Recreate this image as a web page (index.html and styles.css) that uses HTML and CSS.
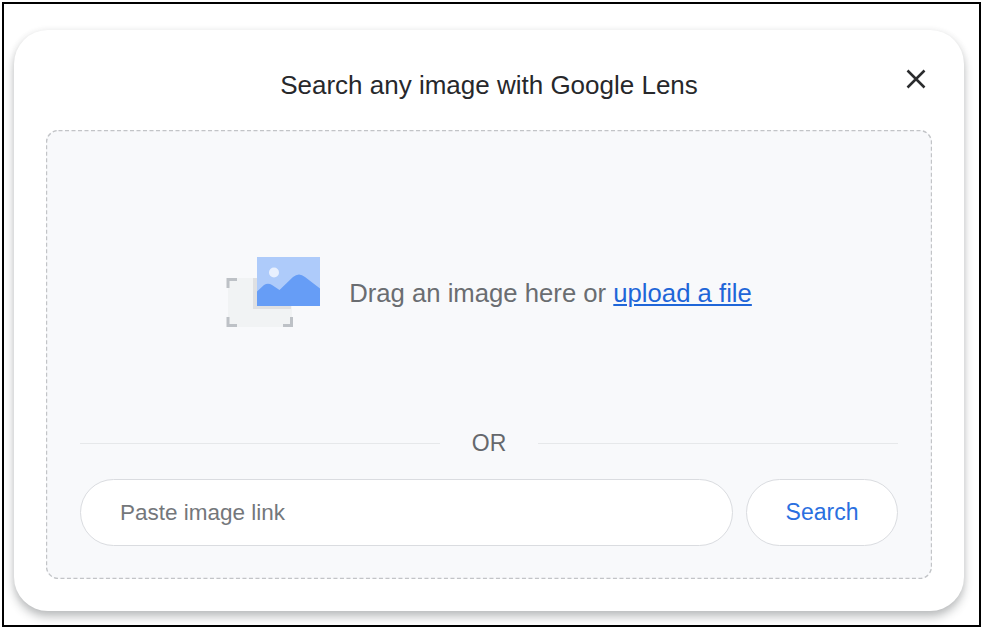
FILE: index.html
```html
<!DOCTYPE html>
<html lang="en">
<head>
<meta charset="utf-8">
<title>Search any image with Google Lens</title>
<link rel="stylesheet" href="styles.css">
</head>
<body>
<div class="frame">
  <section class="card">
    <header class="card-head">
      <h1 class="title">Search any image with Google Lens</h1>
      <button class="close" aria-label="Close">
        <svg width="20" height="20" viewBox="0 0 20 20"><path d="M1.500 1.500 18.500 18.500M18.500 1.500 1.500 18.500" stroke="#2b2c2e" stroke-width="2.500" fill="none"/></svg>
      </button>
    </header>
    <div class="dropzone">
      <svg class="dash-border"><rect class="dash-rect" x="0.500" y="0.500" rx="12" ry="12"/></svg>
      <div class="drop-msg">
        <svg class="drop-icon" width="96" height="72" viewBox="0 0 96 72">
          <rect x="3" y="22" width="64" height="49" fill="#f1f3f4"/>
          <rect x="28" y="22" width="38" height="31" fill="#dfe0e2"/>
          <path d="M12 23.500H3V32M3 61V69.500H12M58 69.500H66.500V61" stroke="#bdc1c6" stroke-width="3" fill="none"/>
          <rect x="32" y="1" width="63" height="49" fill="#aecbfa"/>
          <circle cx="49" cy="16.500" r="5" fill="#e8f0fe"/>
          <path d="M32 35.500 39 29Q43 26.500 47 29L54.500 34 68 21Q74 16 80 21L95 32.500V50H32Z" fill="#669df6"/>
        </svg>
        <p class="drop-text">Drag an image here or <a href="#" class="upload">upload a file</a></p>
      </div>
      <div class="or-row"><span class="or-line"></span><span class="or-text">OR</span><span class="or-line"></span></div>
      <div class="link-row">
        <div class="link-input">Paste image link</div>
        <button class="search-btn">Search</button>
      </div>
    </div>
  </section>
</div>
</body>
</html>
```
FILE: styles.css
```css
* { box-sizing: border-box; }
html, body { margin: 0; background: #fff; }
body { padding: 2px 0 0 2px; height: 629px; overflow: hidden; font-family: "Liberation Sans", Arial, sans-serif; }
.frame {
  width: 979px;
  height: 625px;
  border: 2px solid #000;
  padding: 26px 15px 13px 10px;
}
.card {
  height: 581px;
  background: #fff;
  border-radius: 34px;
  box-shadow: 0 6px 10px rgba(60, 64, 67, .32), 0 0 6px rgba(60, 64, 67, .08);
  padding: 0 32px 32px;
  display: flex;
  flex-direction: column;
}
.card-head {
  height: 100px;
  display: flex;
  align-items: flex-start;
  justify-content: center;
  position: relative;
}
.title {
  margin: 40px 0 0;
  font-size: 26px;
  line-height: 30px;
  font-weight: 400;
  color: #27282b;
}
.close {
  position: absolute;
  right: 6px;
  top: 39px;
  width: 20px;
  height: 20px;
  padding: 0;
  border: 0;
  background: none;
  display: flex;
}
.dropzone {
  flex: 1;
  position: relative;
  border-radius: 12px;
  background: #f8f9fb;
  padding: 0 34px 33px;
  display: flex;
  flex-direction: column;
}
.dash-border {
  position: absolute;
  top: 0;
  left: 0;
  width: 100%;
  height: 100%;
  pointer-events: none;
}
.dash-rect {
  width: calc(100% - 1px);
  height: calc(100% - 1px);
  fill: none;
  stroke: #c2c4c7;
  stroke-width: 1.4;
  stroke-dasharray: 4 2.500;
}
.drop-msg {
  height: 302px;
  display: flex;
  align-items: center;
  justify-content: center;
  gap: 28px;
  padding: 24px 0 0 0;
}
.drop-icon { display: block; flex: none; margin-bottom: 2px; margin-left: -1px; }
.drop-text {
  margin: 0;
  font-size: 25.700px;
  color: #6a6d71;
  white-space: nowrap;
}
.upload { color: #1f66d8; }
.or-row {
  display: flex;
  align-items: center;
  height: 23px;
}
.or-line { flex: 1; height: 1px; background: #e6e8ea; }
.or-text {
  width: 98px;
  text-align: center;
  font-size: 23px;
  color: #65686c;
}
.link-row {
  display: flex;
  gap: 13px;
  margin-top: 24px;
  height: 67px;
}
.link-input {
  flex: 1;
  background: #fff;
  border: 1px solid #dadce0;
  border-radius: 34px;
  padding-left: 39px;
  display: flex;
  align-items: center;
  font-size: 22.500px;
  color: #74777b;
}
.search-btn {
  width: 152px;
  background: #fff;
  border: 1px solid #dadce0;
  border-radius: 34px;
  font: inherit;
  font-size: 23px;
  color: #2a6fe0;
}
```
